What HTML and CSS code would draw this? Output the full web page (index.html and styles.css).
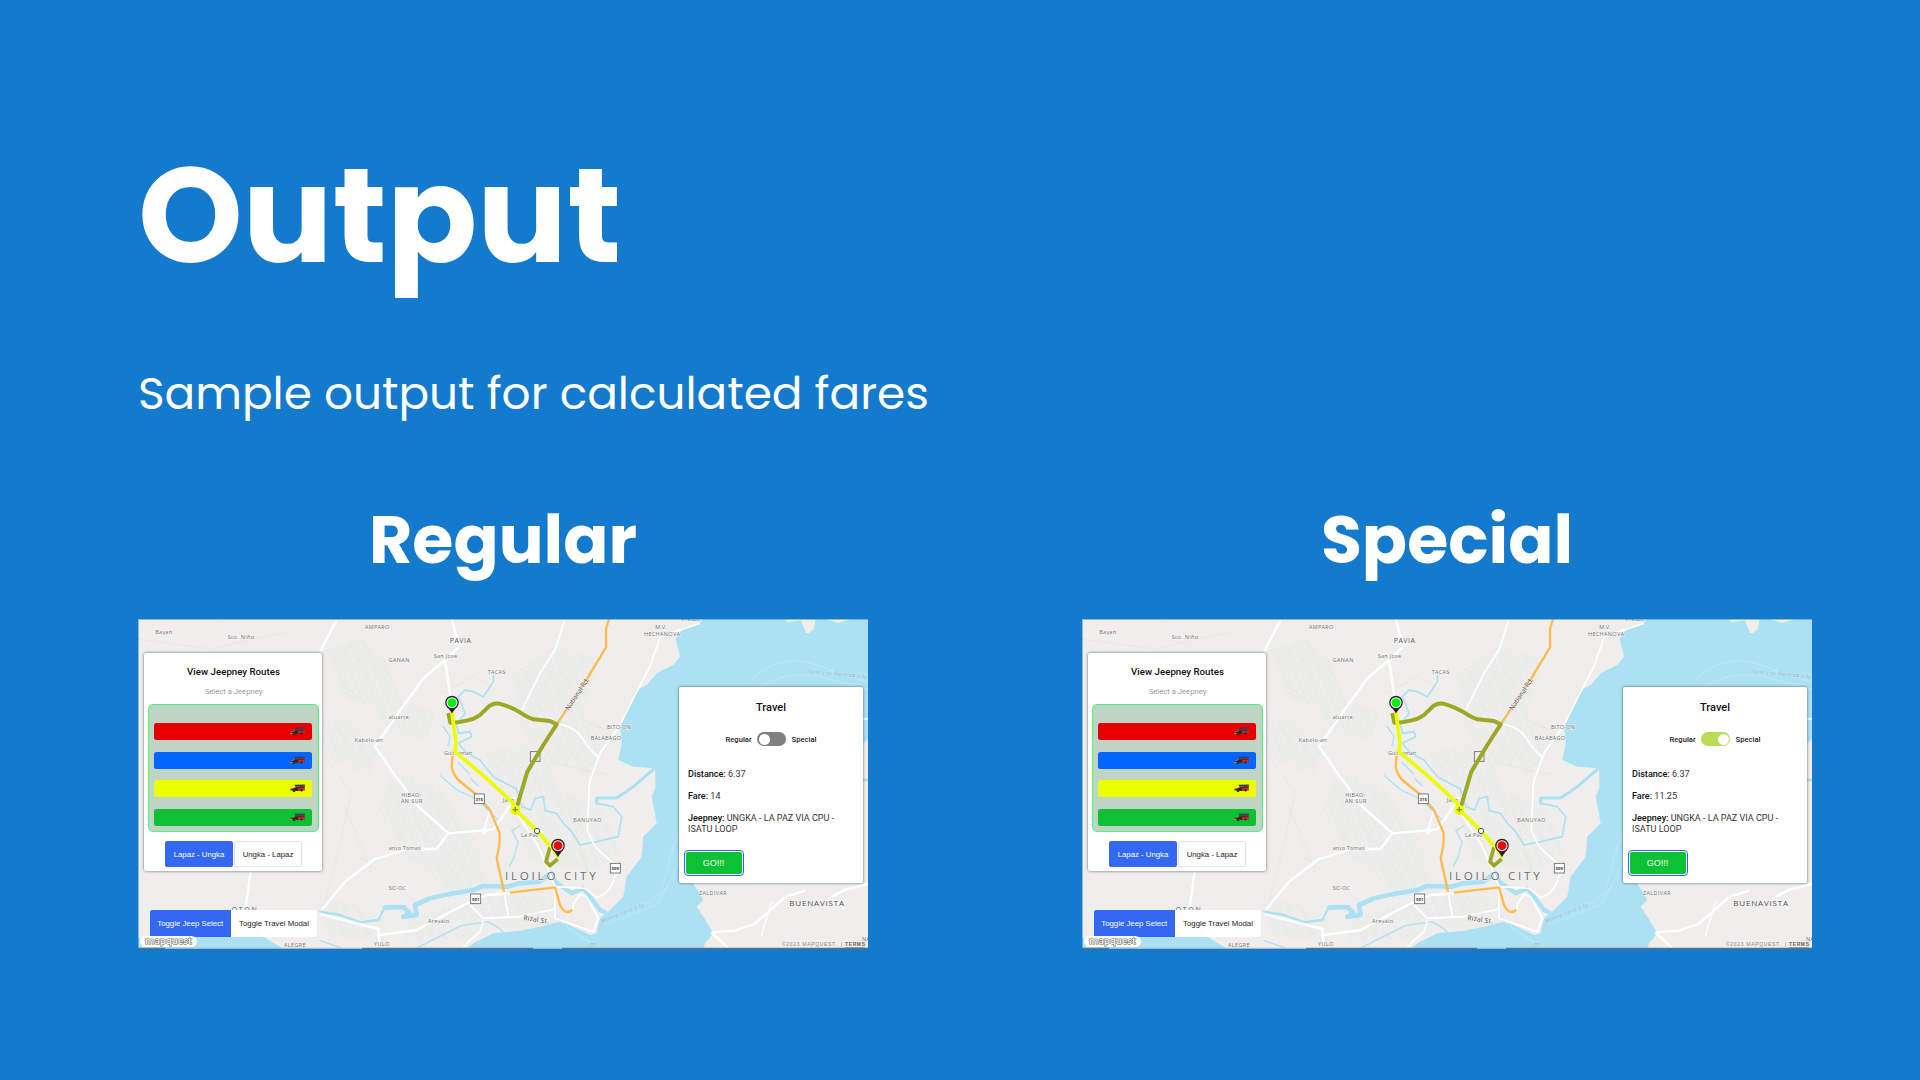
FILE: index.html
```html
<!DOCTYPE html>
<html lang="en">
<head>
<meta charset="utf-8">
<title>Output</title>
<link rel="stylesheet" href="styles.css">
</head>
<body>
<main class="slide">
  <h1 class="title">Output</h1>
  <p class="subtitle">Sample output for calculated fares</p>
  <div class="columns">
    <section class="column" data-fare="14" data-mode="regular">
      <h2 class="heading">Regular</h2>
    </section>
    <section class="column" data-fare="11.25" data-mode="special">
      <h2 class="heading">Special</h2>
    </section>
  </div>
</main>

<template id="app">
  <div class="app">
    <svg class="map" viewBox="0 0 2190 990">
      <defs>
        <pattern id="streets" width="34" height="30" patternUnits="userSpaceOnUse" patternTransform="rotate(-24)">
          <path d="M0 5H34M0 17H20M8 0V17M24 5V30M14 17V30M0 25H14" fill="none" stroke="#dfe1e6" stroke-width="1.6"/>
        </pattern>
      </defs>
      <rect width="2190" height="990" fill="#efeeec"/>
      <g fill="url(#streets)" opacity=".6">
        <path d="M560 90l110-30 70 60 50 120 100 40-20 90-110-30-60-80-90-20z"/>
        <path d="M550 290l90 20 90 90-40 70-130-60z"/>
        <path d="M760 460l140 40 110 160 60 160-110 10-150-110-90-150z"/>
        <path d="M1120 170l130-90 130 30-40 170 90 80-90 110-120-40-70-110z"/>
        <path d="M1030 400l170-30 60 140 130 60 60 130-90 60-180-40-60-160z"/>
        <path d="M1090 820l160 20 110 80-120 20-170-20z"/>
        <path d="M820 900l220-80 90 70-150 70-190 10z"/>
        <path d="M540 830l110 20 100 120-180-20z"/>
      </g>
      <g fill="none" stroke="#e4e4e1" stroke-width="2">
        <path d="M0 60L220 90 440 40M230 0L330 100M560 410L640 520 600 700 560 850M620 560L700 760M600 180L760 330M900 230l110-60 60 40M1240 430l180 40M1330 300l90 40M1290 560l60 200M650 700l200 160"/>
      </g>

      <path fill="#ace1f4" d="M1613 60L1631 33 1676 18 1696 0H2190V990H985L1006 973 1066 943 1146 935 1206 923 1266 908 1306 923 1356 948 1376 943 1386 898 1416 873 1456 833 1466 773 1511 713 1516 653 1556 613 1541 533 1553 503 1551 448 1486 443 1441 423 1451 373 1446 318 1471 273 1496 213 1526 198 1556 163 1606 138 1626 113z"/>
      <path fill="#ace1f4" d="M0 957L70 955 376 953 436 990H0z"/>
      <g fill="#efeeec">
        <path d="M1664 790L1696 843 1676 863 1696 893 1726 943 1701 973 1696 990H2190V360L2120 420 2000 780z"/>
        <path d="M1936 0l14 10 38-7 16 38 10 2 14-14 5-29z"/>
        <path d="M2060 0l40 12 40-12z"/>
      </g>
      <g fill="none" stroke="#ace1f4" stroke-linejoin="round" stroke-linecap="round">
        <path stroke-width="7" d="M546 878L606 888 666 910 721 903 741 863"/>
        <path stroke-width="14" d="M741 866L796 864 814 882 796 894 836 888 831 858 876 838 946 823 1006 813 1036 801 1106 803 1146 793 1206 788 1236 763"/>
        <path stroke-width="13" d="M1238 760L1254 790 1301 823 1336 808 1356 833 1386 873 1406 883"/>
        <path stroke-width="5" d="M1066 168L1066 188 1036 233 1006 218 981 213 961 233 971 258 981 283 956 318 961 343 996 338 1001 353 961 373 986 403 1026 423 1066 473 1136 510 1152 563 1178 573 1191 538 1216 533 1222 575 1256 583 1276 613 1301 638 1326 678 1376 668 1441 653 1451 593 1426 563 1376 553"/>
        <path stroke-width="9" d="M1376 553L1376 537 1436 537 1486 503 1546 451"/>
        <path stroke-width="4" d="M916 323L936 353 930 380M907 470L960 515 1017 540 1057 580 1087 610M960 430L995 465M1000 480L1020 500M1146 620L1122 635 1140 670 1128 715 1115 740"/>
        <path stroke-width="4" d="M546 965l60 20M840 985L970 920 1050 908 1085 928 1100 945"/>
      </g>

      <g fill="none" stroke="#fff" stroke-width="7" stroke-linejoin="round">
        <path d="M596 3L546 98M941 0L955 50 971 76 921 123 856 178 791 268 711 383 761 455 836 558 931 643 1066 631 1101 583 1131 533M921 123L943 273"/>
        <path d="M931 643L896 690 811 690 711 720 621 788 551 873M546 885L721 930 726 980M726 948L836 933 986 853 1046 828 1116 823M338 757L322 875"/>
        <path stroke-width="5" d="M1281 0L1251 93 1206 163 1151 273M1258 316Q1311 318 1341 370 1361 400 1381 413M1686 13L1566 53 1536 143 1486 238 1446 318 1386 403 1354 493 1348 633 1371 683 1441 748 1416 808Q1400 830 1376 835L1341 808 1251 803M1136 583L1196 673 1236 763 1251 803V898M1098 818L1111 893M996 858L1036 898 1146 893 1251 870M1036 903L1026 938 976 983M1251 898L1366 938 1381 898 1346 833 1326 825 1308 853 1303 873M1050 635L1035 645 1055 575"/>
        <path d="M1720 940L1790 935 1850 915 1940 835 2000 815M1720 940L1770 985M2070 840L2120 812 2190 795"/>
        <path stroke-width="4" d="M2174 300h16M2080 840l40 30M1900 850l-30 100"/>
      </g>
      <g fill="none" stroke="#cfeef9" stroke-width="2" stroke-dasharray="7 3">
        <path d="M1400 905L1530 850 1570 820 1600 700 1660 560M1400 918L1555 858 1600 780 1640 680M1840 180Q1920 110 2010 130L2190 190M1850 215Q1940 150 2050 175L2190 210M1260 905L1370 980"/>
      </g>
      <path d="M2174 483h16" stroke="#ace1f4" stroke-width="8"/>

      <g fill="none" stroke="#fdbb4e" stroke-width="7" stroke-linejoin="round">
        <path d="M1413 0L1404 30V85L1348 178 1258 313M944 408L941 443Q945 465 961 483L1016 528 1056 573 1084 640Q1088 670 1076 718L1098 818M1116 821L1251 805 1266 858Q1282 890 1303 873"/>
      </g>

      <g class="labels">
        <text x="52" y="44" textLength="50">Bayan</text>
        <text x="269" y="61" textLength="79">Sto. Niño</text>
        <text x="681" y="31" textLength="73">AMPARO</text>
        <text class="town" x="935" y="71" textLength="64">PAVIA</text>
        <text x="752" y="130" textLength="62">GANAN</text>
        <text x="887" y="117" textLength="70">San Jose</text>
        <text x="1049" y="165" textLength="53">TACAS</text>
        <text x="752" y="300" textLength="60">aluarte</text>
        <text x="650" y="368" textLength="84">Kabolo-an</text>
        <text x="918" y="407" textLength="84">Guintoman</text>
        <text x="790" y="533" textLength="60">HIBAO-</text>
        <text x="789" y="553" textLength="64">AN SUR</text>
        <text x="1094" y="549" textLength="34">Jaro</text>
        <text x="752" y="693" textLength="96">anto Tomas</text>
        <text x="752" y="812" textLength="51">SO-OC</text>
        <text x="870" y="912" textLength="63">Arevalo</text>
        <text x="708" y="982" textLength="46">YULO</text>
        <text x="438" y="983" textLength="65">ALEGRE</text>
        <text class="town" x="281" y="880" textLength="75">OTON</text>
        <text x="1552" y="31" textLength="34">M.V.</text>
        <text x="1518" y="51" textLength="108">HECHANOVA</text>
        <text x="1630" y="7" textLength="56">A. NUBO</text>
        <text x="1407" y="330" textLength="72">BITO-ON</text>
        <text x="1358" y="362" textLength="91">BALABAGO</text>
        <text x="1306" y="609" textLength="84">BANUYAO</text>
        <text x="1149" y="653" textLength="52">La Paz</text>
        <text class="city" x="1101" y="784" textLength="272">ILOILO CITY</text>
        <text class="road" transform="translate(1292 275) rotate(-56)" textLength="112">National Rd.</text>
        <text class="road" transform="translate(1156 903) rotate(8)" textLength="76">Rizal St.</text>
        <text class="sea" transform="translate(1392 912) rotate(-22)" textLength="136">Manila-Iloilo City</text>
        <text class="sea" transform="translate(1352 990) rotate(-35)">City</text>
        <text class="sea" transform="translate(2007 162) rotate(5)" textLength="180">Iloilo City-Bacolod City</text>
        <text x="1683" y="827" textLength="83">ZALDIVAR</text>
        <text class="big" x="1954" y="861" textLength="164">BUENAVISTA</text>
        <text x="2172" y="965">NA</text>
      </g>
      <g class="shield">
        <rect x="1009" y="525" width="30" height="29"/><text x="1024" y="545">315</text>
        <rect x="998" y="825" width="30" height="29"/><text x="1013" y="845">501</text>
        <rect x="1417" y="733" width="30" height="29"/><text x="1432" y="753">509</text>
        <rect x="1177" y="398" width="29" height="29"/>
      </g>

      <g fill="none" stroke-linejoin="round">
        <path stroke="#9aa825" stroke-width="12" d="M931 282L937 311Q965 311 986 305 1010 300 1026 288L1055 260Q1072 250 1091 256 1120 264 1146 280 1165 294 1186 301L1236 306 1256 316 1216 378 1168 458 1134 573"/>
        <path stroke="#9aa825" stroke-width="11" d="M1236 684L1224 728 1236 740 1259 720"/>
        <path stroke="#ecff00" stroke-width="11" d="M942 280L954 373 951 398 1046 478 1126 553 1136 575 1196 635 1238 682"/>
        <path stroke="#ecff00" stroke-width="7" d="M1234 677L1263 718"/>
      </g>
      <circle cx="1132" cy="573" r="15" fill="#ecff00"/>
      <path d="M1124 572h16M1132 564v16" stroke="#8d8d25" stroke-width="4"/>
      <circle cx="1197" cy="636" r="8" fill="#fff" stroke="#555" stroke-width="3"/>
      <g transform="translate(942 251)">
        <path d="M-16 10L0 32 16 10z" fill="#252525"/>
        <circle r="18.5" fill="#fff" stroke="#252525" stroke-width="4"/><circle r="13.500" fill="#00f500"/>
      </g>
      <g transform="translate(1260 680)">
        <path d="M-16 10L0 34 16 10z" fill="#252525"/>
        <circle r="18.5" fill="#fff" stroke="#252525" stroke-width="4"/><circle r="13.500" fill="#f80000"/>
      </g>

      <text class="credit" x="1932" y="982" textLength="164">©2023 MAPQUEST.</text>
      <text class="credit" x="2109" y="982">|</text>
      <text class="credit strong" x="2121" y="982" textLength="60">TERMS</text>
      <path d="M2121 986h60" stroke="#666" stroke-width="2"/>
      <path d="M0 988H2190" stroke="#a4adb0" stroke-width="3"/>
      <path d="M0 988H82M672 988H1185M1272 988H2190" stroke="#5e6264" stroke-width="3"/>
    </svg>

    <section class="card routes">
      <h3 class="card-title">View Jeepney Routes</h3>
      <p class="hint">Select a Jeepney</p>
      <div class="jeeps">
        <div class="jeep red"></div>
        <div class="jeep blue"></div>
        <div class="jeep yellow"></div>
        <div class="jeep green"></div>
      </div>
      <div class="directions">
        <button class="btn primary">Lapaz - Ungka</button>
        <button class="btn outlined">Ungka - Lapaz</button>
      </div>
    </section>

    <div class="toggles">
      <button class="btn primary">Toggle Jeep Select</button>
      <button class="btn plain">Toggle Travel Modal</button>
    </div>
    <div class="brand">mapquest</div>

    <section class="card travel">
      <h3 class="card-title">Travel</h3>
      <div class="mode"><span>Regular</span><i class="switch"></i><span>Special</span></div>
      <p class="row"><b>Distance:</b> 6.37</p>
      <p class="row"><b>Fare:</b> <span class="fare"></span></p>
      <p class="row"><b>Jeepney:</b> UNGKA - LA PAZ VIA CPU -<br>ISATU LOOP</p>
      <button class="go">GO!!!</button>
    </section>
  </div>
</template>

<template id="jeep-icon">
  <svg class="jeep-icon" viewBox="0 0 46 25">
    <path d="M13 2l31-1 2 4-30 2z" fill="#24436e"/>
    <path d="M17 6h3v6h-3zM43 5h2v8h-2z" fill="#30343c"/>
    <path d="M19 7l25-2v14l-20 2-9-4z" fill="#b8292c"/>
    <path d="M21 8l20-1v4l-19 1z" fill="#4c2a30"/>
    <path d="M1 14l15-4 8 2v8l-20 1z" fill="#2b2430"/>
    <path d="M4 14l10-3" stroke="#d9a13a" stroke-width="2"/>
    <circle cx="12" cy="20" r="4" fill="#18191d"/><circle cx="12" cy="20" r="1.5" fill="#d9a13a"/>
    <circle cx="34" cy="19" r="3" fill="#18191d"/>
    <path d="M1 17h6v4H1z" fill="#c9932d"/>
  </svg>
</template>
<script src="app.js"></script>
</body>
</html>
```

FILE: styles.css
```css
* { box-sizing: border-box; }
body { margin: 0; background: #137acd; }
h1, h2, h3, p { margin: 0; }

.slide {
  width: 1920px;
  height: 1080px;
  padding: 149px 108px 0 138px;
  overflow: hidden;
  color: #fff;
  font-family: Poppins, Inter, "Open Sans", sans-serif;
}
.title { font-size: 133.33px; line-height: 133px; font-weight: 700; }
.subtitle { margin-top: 88px; font-size: 45.33px; line-height: 46px; font-weight: 400; white-space: nowrap; }
.columns { display: flex; gap: 214px; margin-top: 90px; }
.column { width: 730px; }
.heading { margin-bottom: 46px; font-size: 66.67px; line-height: 67px; font-weight: 700; text-align: center; }

.app {
  position: relative;
  width: 730px;
  height: 330px;
  overflow: hidden;
  color: #222;
  font-family: Roboto, sans-serif;
}
.app::after {
  content: "";
  position: absolute;
  inset: 0;
  box-shadow: inset 1px 1px rgba(19, 122, 205, .45);
}
.map { display: block; width: 730px; height: 330px; }

.labels text {
  font: 16.5px "Open Sans", sans-serif;
  fill: #717274;
  stroke: #f4f3f1;
  stroke-width: 3px;
  paint-order: stroke;
}
.labels .town { font-size: 21px; fill: #5c5e60; }
.labels .big { font-size: 24px; fill: #505153; }
.labels .city { font-size: 35px; fill: #6c6d6f; }
.labels .road { font-size: 20px; fill: #4c4c4c; }
.labels .sea { font-size: 16px; font-style: italic; fill: #7ea9bb; stroke: #c3eaf7; }
.shield rect { fill: #fff; fill-opacity: .85; stroke: #666; stroke-width: 2.5px; }
.shield rect:last-child { fill-opacity: .2; }
.shield text { font: bold 13px Roboto, sans-serif; fill: #333; text-anchor: middle; }
.credit { font: 15px "Liberation Sans", sans-serif; fill: #888; }
.credit.strong { font-weight: 700; fill: #666; }

.card {
  position: absolute;
  display: flex;
  flex-direction: column;
  background: #fff;
  border-radius: 2px;
  box-shadow: 0 0 3px rgba(0, 0, 0, .6);
}
.card-title { font-weight: 500; text-align: center; color: #111; }

.routes { left: 6px; top: 34px; width: 178px; height: 218px; padding: 0 3px 0 4px; }
.routes .card-title { padding-top: 13px; font-size: 9.7px; line-height: 12px; }
.hint { padding-top: 9px; font-size: 7.7px; line-height: 10px; text-align: center; color: #999; }
.jeeps {
  display: grid;
  grid-auto-rows: 17px;
  row-gap: 11.5px;
  height: 128px;
  margin-top: 7px;
  padding: 18px 6px 0 5px;
  border: 1px solid #48f77b;
  border-radius: 5px;
  background: #bfd4c4;
}
.jeep { display: flex; align-items: center; justify-content: flex-end; padding-right: 7px; border-radius: 2.5px; }
.jeep-icon { width: 15.5px; height: 8.5px; }
.red { background: #e80000; }
.blue { background: #0066ff; }
.yellow { background: #ecff00; }
.green { background: #0dc133; }
.directions { display: flex; justify-content: center; gap: 1px; margin-top: 9px; }
.btn {
  height: 26px;
  padding: 0;
  border: 0;
  border-radius: 2px;
  font: 7.8px "Liberation Sans", sans-serif;
  white-space: nowrap;
}
.directions .btn { width: 68px; }
.primary { background: #3268f2; color: #fff; }
.outlined { background: #fff; border: 1px solid #e3e3e3; color: #222; }
.plain { background: #fff; color: #222; }

.toggles { position: absolute; left: 11.5px; top: 291px; display: flex; }
.toggles .btn { height: 27px; width: 81.5px; border-radius: 2px 0 0 2px; }
.toggles .plain { width: 86px; border-radius: 0 2px 2px 0; }

.brand {
  position: absolute;
  left: 2px;
  top: 317px;
  width: 57px;
  height: 11px;
  border-radius: 6px;
  background: #fff;
  color: #fff;
  font: 600 9.5px/9px "Open Sans", sans-serif;
  text-align: center;
  -webkit-text-stroke: 1px #555;
  paint-order: stroke;
}

.travel { left: 541px; top: 68px; width: 184px; height: 196px; padding: 0 9px; }
.travel .card-title { padding-top: 14px; font-size: 11px; line-height: 13px; }
.mode {
  display: flex;
  align-items: center;
  justify-content: center;
  gap: 5.5px;
  margin: 18px 0 22.5px;
  height: 14px;
  font-size: 7.6px;
  font-weight: 500;
}
.switch { display: flex; width: 29px; height: 14px; padding: 1.5px; border-radius: 7px; background: #808080; }
.switch::before { content: ""; width: 11px; height: 11px; border-radius: 50%; background: #fff; }
.special .switch { justify-content: flex-end; background: #b9db55; }
.row { margin-bottom: 11.3px; font-size: 9.05px; line-height: 11px; color: #333; white-space: nowrap; }
.row b { font-weight: 500; color: #111; }
.go {
  width: 56px;
  height: 22px;
  margin: 5.5px 0 0 -2.5px;
  padding: 0;
  border: 0;
  border-radius: 2px;
  outline: 1px solid #2f64ea;
  outline-offset: 1px;
  background: #0dc133;
  color: #fff;
  font: 9px "Liberation Sans", sans-serif;
}
```

FILE: app.js
```js
const app = document.getElementById('app');
const icon = document.getElementById('jeep-icon');

document.querySelectorAll('.column').forEach((column) => {
  const view = app.content.cloneNode(true);
  view.querySelector('.fare').textContent = column.dataset.fare;
  view.querySelector('.travel').classList.add(column.dataset.mode);
  view.querySelectorAll('.jeep').forEach((bar) => bar.append(icon.content.cloneNode(true)));
  column.append(view);
});
```
